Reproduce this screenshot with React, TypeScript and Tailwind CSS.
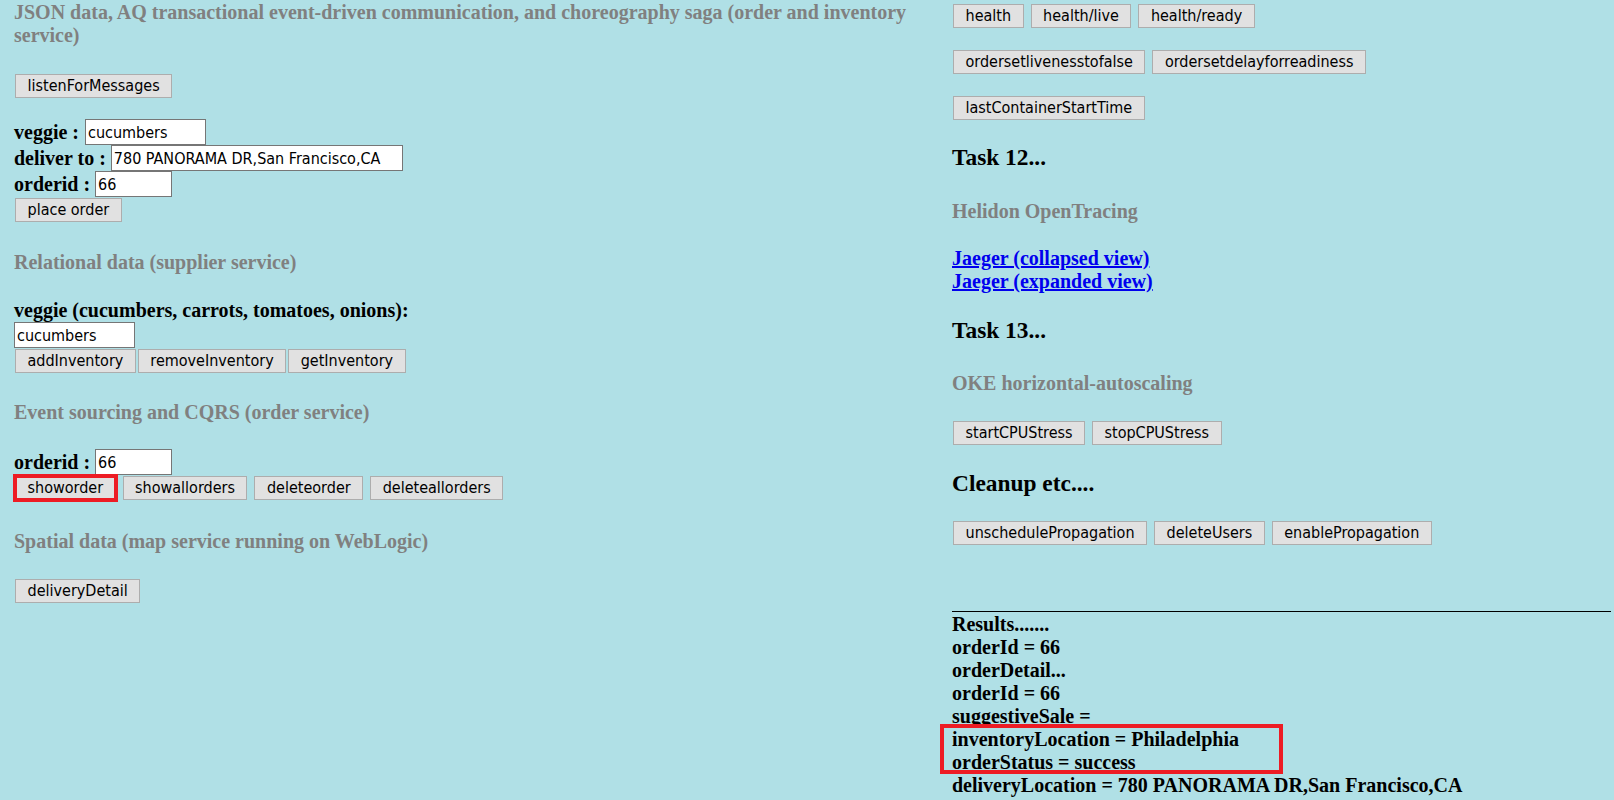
import React from 'react';

const Btn: React.FC<{ label: string; className?: string }> = ({ label, className = '' }) => (
  <button
    type="button"
    className={`h-6 shrink-0 border border-[#adadad] bg-[#e1e1e1] px-[11.5px] font-['DejaVu_Sans_Condensed','Liberation_Sans',sans-serif] text-[16px] font-normal leading-none text-black ${className}`}
  >
    {label}
  </button>
);

const Field: React.FC<{ value: string; width: string }> = ({ value, width }) => (
  <input
    readOnly
    value={value}
    className={`h-[26px] border border-[#767676] bg-white px-[2px] font-['DejaVu_Sans_Condensed','Liberation_Sans',sans-serif] text-[16px] font-normal text-black outline-none ${width}`}
  />
);

const Section: React.FC<{ children: React.ReactNode; className?: string }> = ({ children, className = '' }) => (
  <h4 className={`text-[20px] font-bold leading-[23px] text-[#808080] ${className}`}>{children}</h4>
);

const Task: React.FC<{ children: React.ReactNode; className?: string }> = ({ children, className = '' }) => (
  <h3 className={`text-[23.4px] font-bold leading-[27px] text-black ${className}`}>{children}</h3>
);

const results = [
  'Results.......',
  'orderId = 66',
  'orderDetail...',
  'orderId = 66',
  'suggestiveSale =',
];

export default function App() {
  return (
    <div className="grid min-h-screen grid-cols-[938px_1fr] bg-[#b0e0e6] pl-[14px] pr-[3px] font-['Liberation_Serif','Times_New_Roman',serif] text-black">
      {/* left column */}
      <div>
        <Section className="mt-px">
          JSON data, AQ transactional event-driven communication, and choreography saga (order and inventory service)
        </Section>
        <div className="mt-[27px] ml-px">
          <Btn label="listenForMessages" />
        </div>

        <div className="mt-[21px] text-[20px] font-bold leading-[23px]">
          <div className="flex h-[26px] items-center gap-[6px]">
            <span>veggie :</span>
            <Field value="cucumbers" width="w-[121px]" />
          </div>
          <div className="flex h-[26px] items-center gap-[5px]">
            <span>deliver to :</span>
            <Field value="780 PANORAMA DR,San Francisco,CA" width="w-[292px]" />
          </div>
          <div className="flex h-[26px] items-center gap-[5px]">
            <span>orderid :</span>
            <Field value="66" width="w-[77px]" />
          </div>
        </div>
        <div className="mt-px ml-px">
          <Btn label="place order" />
        </div>

        <Section className="mt-[29px]">Relational data (supplier service)</Section>
        <div className="mt-[25px] text-[20px] font-bold leading-[23px]">
          veggie (cucumbers, carrots, tomatoes, onions):
        </div>
        <div className="flex">
          <Field value="cucumbers" width="w-[121px]" />
        </div>
        <div className="mt-px ml-px flex gap-[2px]">
          <Btn label="addInventory" />
          <Btn label="removeInventory" />
          <Btn label="getInventory" />
        </div>

        <Section className="mt-[28px]">Event sourcing and CQRS (order service)</Section>
        <div className="mt-[25px] flex h-[26px] items-center gap-[5px] text-[20px] font-bold leading-[23px]">
          <span>orderid :</span>
          <Field value="66" width="w-[77px]" />
        </div>
        <div className="mt-px ml-px flex gap-[7px]">
          <Btn label="showorder" className="outline-4 -outline-offset-2 outline-[#ed1c24]" />
          <Btn label="showallorders" />
          <Btn label="deleteorder" />
          <Btn label="deleteallorders" />
        </div>

        <Section className="mt-[30px]">Spatial data (map service running on WebLogic)</Section>
        <div className="mt-[26px] ml-px">
          <Btn label="deliveryDetail" />
        </div>
      </div>

      {/* right column */}
      <div>
        <div className="mt-1 ml-px flex gap-[7px]">
          <Btn label="health" />
          <Btn label="health/live" />
          <Btn label="health/ready" />
        </div>
        <div className="mt-[22px] ml-px flex gap-[7px]">
          <Btn label="ordersetlivenesstofalse" />
          <Btn label="ordersetdelayforreadiness" />
        </div>
        <div className="mt-[22px] ml-px flex">
          <Btn label="lastContainerStartTime" />
        </div>

        <Task className="mt-[24px]">Task 12...</Task>
        <Section className="mt-[29px]">Helidon OpenTracing</Section>
        <div className="mt-[24px] flex flex-col items-start text-[20px] font-bold leading-[23px]">
          <a href="#" className="text-[#0000ee] underline">Jaeger (collapsed view)</a>
          <a href="#" className="text-[#0000ee] underline">Jaeger (expanded view)</a>
        </div>

        <Task className="mt-[24px]">Task 13...</Task>
        <Section className="mt-[28px]">OKE horizontal-autoscaling</Section>
        <div className="mt-[26px] ml-px flex gap-[7px]">
          <Btn label="startCPUStress" />
          <Btn label="stopCPUStress" />
        </div>

        <Task className="mt-[25px]">Cleanup etc....</Task>
        <div className="mt-[24px] ml-px flex gap-[7px]">
          <Btn label="unschedulePropagation" />
          <Btn label="deleteUsers" />
          <Btn label="enablePropagation" />
        </div>

        <div className="mt-[66px] h-px bg-black" />
        <div className="mt-px text-[20px] font-bold leading-[23px]">
          {results.map((line, i) => (
            <div key={i}>{line}</div>
          ))}
          <div className="relative">
            <div>inventoryLocation = Philadelphia</div>
            <div>orderStatus = success</div>
            <div className="pointer-events-none absolute -left-3 -top-1 h-[50px] w-[343px] border-4 border-[#ed1c24]" />
          </div>
          <div>deliveryLocation = 780 PANORAMA DR,San Francisco,CA</div>
        </div>
      </div>
    </div>
  );
}
